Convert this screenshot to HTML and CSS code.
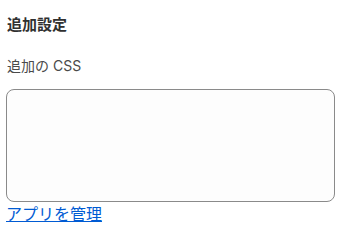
FILE: index.html
```html
<!DOCTYPE html>
<html lang="ja">
<head>
    <meta charset="UTF-8">
    <meta name="viewport" content="width=device-width, initial-scale=1.0">
    <title>追加設定</title>
    <link rel="stylesheet" href="styles.css">
</head>
<body>
    <!-- Additional settings -->
    <section class="settings">
        <h2 class="settings-title">追加設定</h2>
        <label class="field-label" for="customCss">追加の CSS</label>
        <textarea class="field-input" id="customCss"></textarea>
        <a href="#" class="manage-link">アプリを管理</a>
    </section>
</body>
</html>
```

FILE: styles.css
```css
* {
    margin: 0;
    padding: 0;
    box-sizing: border-box;
}

body {
    font-family: Inter, "Noto Sans CJK JP", sans-serif;
    color: #303030;
    background: #fff;
}

.settings {
    display: flex;
    flex-direction: column;
    padding: 13px 8px 0 6px;
}

.settings-title {
    font-size: 15px;
    font-weight: 700;
    line-height: 24px;
    padding-left: 1px;
    margin-bottom: 19px;
}

.field-label {
    font-size: 14px;
    line-height: 20px;
    color: #4a4a4a;
    padding-left: 1px;
    margin-bottom: 13px;
}

.field-input {
    height: 113px;
    border: 1px solid #8a8a8a;
    border-radius: 8px;
    background: #fdfdfd;
    resize: none;
    font: inherit;
}

.manage-link {
    font-size: 16px;
    line-height: 24px;
    color: #005bd3;
    align-self: flex-start;
}
```
